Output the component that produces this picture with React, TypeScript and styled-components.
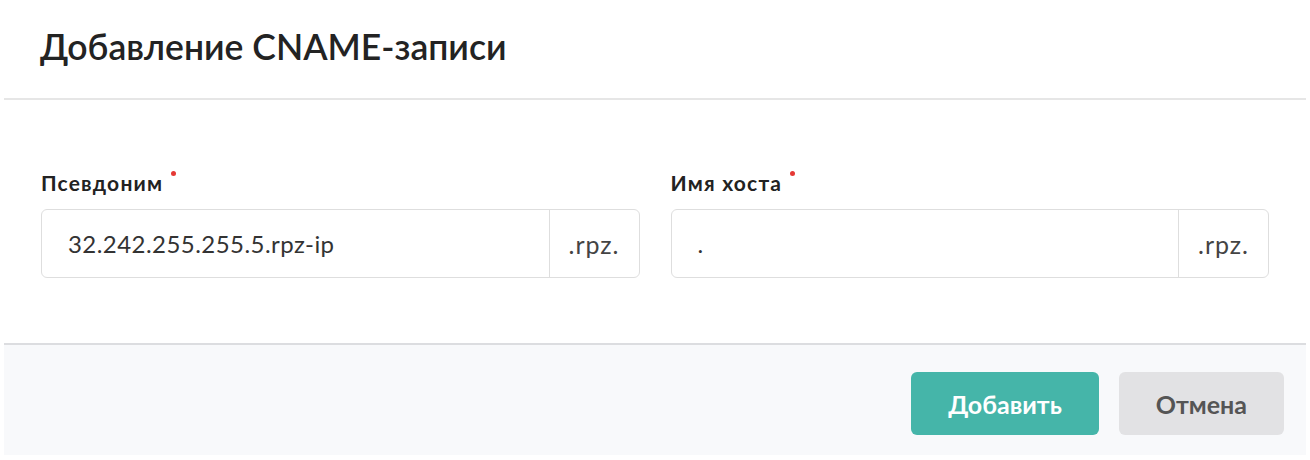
import styled, { createGlobalStyle } from "styled-components";

const GlobalStyle = createGlobalStyle`
    body {
        margin: 0;
        background: #ffffff;
        font-family: Lato, "Noto Sans", sans-serif;
        color: #222222;
    }
`;

const Modal = styled.div`
    margin-left: 4px;
    width: 1302px;
    height: 455px;
    display: flex;
    flex-direction: column;
    background: #ffffff;
`;

const Header = styled.div`
    height: 98px;
    display: flex;
    align-items: center;
    padding: 0 36px;
    border-bottom: 2px solid #e6e6e6;
`;

const Title = styled.h1`
    margin: 0;
    font-size: 35.5px;
    font-weight: 600;
    color: #232323;
    position: relative;
    top: -3px;
`;

const Body = styled.div`
    flex: 1;
    padding: 69px 37px 0;
`;

const FieldRow = styled.div`
    display: grid;
    grid-template-columns: 1fr 1fr;
    column-gap: 31px;
`;

const Field = styled.div`
    display: flex;
    flex-direction: column;
`;

const Label = styled.label`
    font-size: 21px;
    font-weight: 700;
    letter-spacing: 1.2px;
    color: #222222;
    height: 40px;
    line-height: 28px;
`;

const Required = styled.span`
    display: inline-block;
    width: 5px;
    height: 5px;
    margin-left: 8px;
    border-radius: 50%;
    background: #e53935;
    vertical-align: top;
    position: relative;
    top: 2px;
`;

const InputGroup = styled.div`
    display: flex;
    height: 67px;
    border: 1px solid #dedede;
    border-radius: 6px;
    overflow: hidden;
    background: #ffffff;
`;

const TextInput = styled.input`
    flex: 1;
    min-width: 0;
    border: none;
    outline: none;
    padding: 0 26px;
    font-family: Lato, "Noto Sans", sans-serif;
    font-size: 24px;
    letter-spacing: 0.45px;
    color: #333333;
    background: transparent;
`;

const Addon = styled.span`
    width: 89px;
    display: flex;
    align-items: center;
    justify-content: center;
    border-left: 1px solid #dedede;
    font-size: 25px;
    letter-spacing: 1px;
    color: #444444;
`;

const Footer = styled.div`
    height: 112px;
    border-top: 2px solid #dcdde0;
    background: #f8f9fb;
    display: flex;
    justify-content: flex-end;
    align-items: flex-start;
    gap: 20px;
    padding: 27px 22px 0;
    box-sizing: border-box;
`;

const Button = styled.button<{ primary?: boolean }>`
    height: 63px;
    padding: 0 37px;
    border: none;
    border-radius: 6px;
    font-family: Lato, "Noto Sans", sans-serif;
    font-size: 25px;
    font-weight: 700;
    cursor: pointer;
    background: ${props => (props.primary ? "#45b5a9" : "#e2e2e4")};
    color: ${props => (props.primary ? "#ffffff" : "#555555")};
`;

type FieldProps = {
    label: string;
    value: string;
    suffix: string;
};

const DomainField = ({ label, value, suffix }: FieldProps) => (
    <Field>
        <Label>
            {label}
            <Required />
        </Label>
        <InputGroup>
            <TextInput defaultValue={value} />
            <Addon>{suffix}</Addon>
        </InputGroup>
    </Field>
);

export default function App() {
    return (
        <>
            <GlobalStyle />
            <Modal>
                <Header>
                    <Title>Добавление CNAME-записи</Title>
                </Header>
                <Body>
                    <FieldRow>
                        <DomainField label="Псевдоним" value="32.242.255.255.5.rpz-ip" suffix=".rpz." />
                        <DomainField label="Имя хоста" value="." suffix=".rpz." />
                    </FieldRow>
                </Body>
                <Footer>
                    <Button primary>Добавить</Button>
                    <Button>Отмена</Button>
                </Footer>
            </Modal>
        </>
    );
}
